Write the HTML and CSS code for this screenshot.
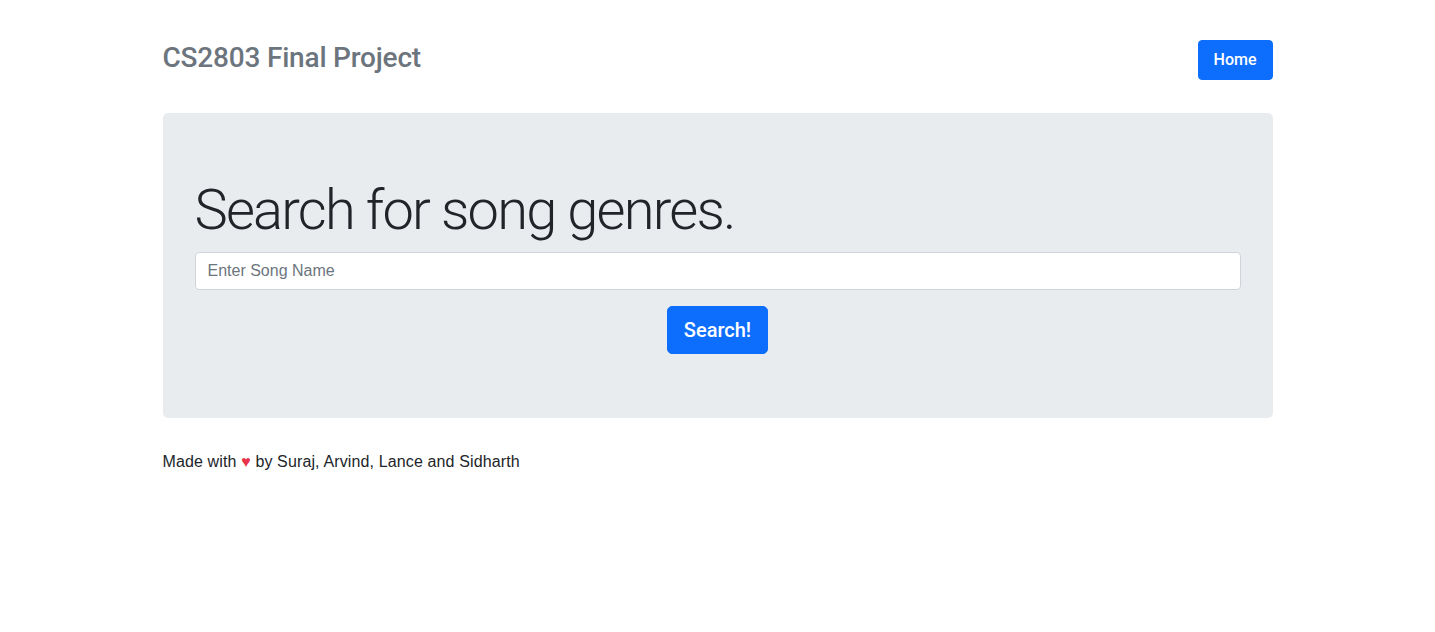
FILE: index.html
```html
<!DOCTYPE html>
<html lang="en">
<head>
<meta charset="utf-8">
<title>CS2803 Final Project</title>
<link rel="stylesheet" href="styles.css">
</head>
<body>
<div class="container">
  <header class="topbar">
    <h3 class="brand">CS2803 Final Project</h3>
    <a class="btn btn-primary" href="#">Home</a>
  </header>
  <main class="jumbotron">
    <h1 class="display">Search for song genres.</h1>
    <form class="search-form">
      <div class="form-group">
        <input class="form-control" type="text" placeholder="Enter Song Name">
      </div>
      <div class="center">
        <button class="btn btn-primary btn-lg" type="button">Search!</button>
      </div>
    </form>
  </main>
  <footer class="footer">Made with <span class="heart">&#9829;</span> by Suraj, Arvind, Lance and Sidharth</footer>
</div>
</body>
</html>
```
FILE: styles.css
```css
* { box-sizing: border-box; }
html, body { margin: 0; padding: 0; }
body {
  font-family: "Liberation Sans", Arial, sans-serif;
  font-size: 16px;
  line-height: 1.5;
  color: #212529;
  background: #fff;
}
.container {
  width: 1110px;
  margin: 0 auto;
}
.topbar {
  display: flex;
  justify-content: space-between;
  align-items: flex-start;
  padding-top: 40px;
  margin-bottom: 33px;
}
.brand {
  margin: 0;
  font-family: Roboto, "Liberation Sans", sans-serif;
  font-size: 28px;
  font-weight: 500;
  line-height: 1.2;
  color: #6c757d;
  letter-spacing: -0.2px;
  padding-top: 1px;
}
.btn {
  display: inline-block;
  font-family: Roboto, "Liberation Sans", sans-serif;
  font-size: 16px;
  font-weight: 500;
  line-height: 24px;
  padding: 7px 15px;
  border: 1px solid transparent;
  border-radius: 4px;
  text-decoration: none;
  cursor: pointer;
}
.btn-primary {
  background: #0d6efd;
  border-color: #0d6efd;
  color: #fff;
}
.btn-lg {
  font-size: 20px;
  line-height: 30px;
  padding: 8px 16px;
  border-radius: 5px;
}
.jumbotron {
  background: #e9ecef;
  border-radius: 5px;
  padding: 64px 32px;
  margin-bottom: 32px;
}
.display {
  margin: 0 0 8px 0;
  font-family: Roboto, "Liberation Sans", sans-serif;
  font-size: 56px;
  font-weight: 300;
  line-height: 1.2;
  letter-spacing: -1.8px;
}
.search-form { margin: 0; }
.form-group { margin-bottom: 16px; }
.form-control {
  display: block;
  width: 100%;
  height: 38px;
  padding: 6px 12px;
  font-family: inherit;
  font-size: 16px;
  color: #495057;
  background: #fff;
  border: 1px solid #ced4da;
  border-radius: 4px;
}
.form-control::placeholder { color: #6c757d; }
.center { text-align: center; }
.footer { font-size: 16px; letter-spacing: 0.13px; }
.heart { color: #e8334a; }
```
